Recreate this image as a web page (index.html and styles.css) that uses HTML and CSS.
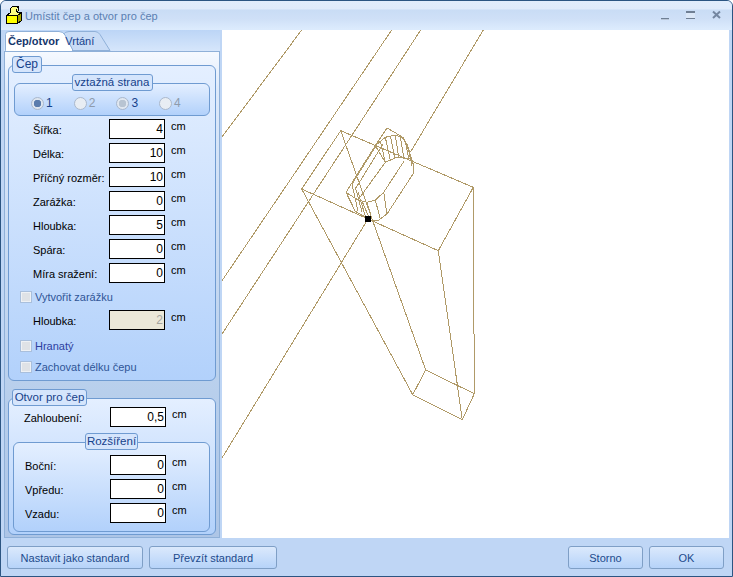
FILE: index.html
```html
<!DOCTYPE html>
<html lang="cs">
<head>
<meta charset="utf-8">
<title>Umístit čep a otvor pro čep</title>
<link rel="stylesheet" href="styles.css">
</head>
<body>
<div class="window">
  <header class="titlebar">
    <svg class="appicon" width="20" height="20" viewBox="0 0 20 20" shape-rendering="crispEdges">
      <path d="M12.500 9.500L16.500 6.500V14.500L12.500 17.500Z" fill="#a8a800" stroke="#000"/>
      <path d="M1.500 9.500L5.500 6.500H16.500L12.500 9.500Z" fill="#ffff80" stroke="#000"/>
      <path d="M1.500 9.500H12.500V17.500H1.500Z" fill="#ffff00" stroke="#000"/>
      <path d="M5.500 6.500V2.500H11.500V6.500" fill="#ffff80" stroke="#000"/>
      <path d="M5.500 2.500L7.500 0.500H13.500L11.500 2.500M13.500 0.500V4.500L11.500 6.500" fill="#ffff80" stroke="#000"/>
    </svg>
    <span class="title">Umístit čep a otvor pro čep</span>
    <div class="controls">
      <svg width="70" height="14" viewBox="0 0 70 14">
        <rect x="0" y="8" width="8" height="1" fill="#6f7f94"/>
        <rect x="0" y="9" width="8" height="1" fill="#b9c6d8"/>
        <rect x="25" y="2" width="9" height="7" fill="#dbe7f7"/>
        <rect x="25" y="1" width="9" height="2" fill="#6f7f94"/>
        <rect x="25" y="8" width="9" height="1" fill="#6f7f94"/>
        <path d="M52 1.500l7 6.500M59 1.500l-7 6.500" stroke="#7486a0" stroke-width="2" fill="none"/>
      </svg>
    </div>
  </header>
  <div class="main">
    <aside class="side">
      <div class="tabstrip">
        <svg class="tabshape" width="112" height="21" viewBox="0 0 112 21">
          <path d="M58.500 4.500Q60 1.500 64 1.500H90Q93 1.500 95 4.500L105 20.500H68Z" fill="#c9dcf6" stroke="#8fb0d8"/>
          <path d="M0.500 20.500V4.500Q0.500 1.500 4 1.500H54Q58 1.500 60 5L68 20.500Z" fill="#fff" stroke="#8fb0d8"/>
          <path d="M1 20.500H67" stroke="#fff"/>
        </svg>
        <span class="tab active">Čep/otvor</span>
        <span class="tab">Vrtání</span>
      </div>
      <div class="tabpanel">
        <section class="group first">
          <div class="legend legend-main">Čep</div>
          <div class="subgroup radiobox">
            <div class="legend legend-center">vztažná strana</div>
            <div class="radios">
              <label class="radio on"><i></i>1</label>
              <label class="radio off"><i></i>2</label>
              <label class="radio dim"><i></i>3</label>
              <label class="radio off"><i></i>4</label>
            </div>
          </div>
          <div class="rows rows-a">
            <label>Šířka:</label><input class="num" value="4"><span>cm</span>
            <label>Délka:</label><input class="num" value="10"><span>cm</span>
            <label>Příčný rozměr:</label><input class="num" value="10"><span>cm</span>
            <label>Zarážka:</label><input class="num" value="0"><span>cm</span>
            <label>Hloubka:</label><input class="num" value="5"><span>cm</span>
            <label>Spára:</label><input class="num" value="0"><span>cm</span>
            <label>Míra sražení:</label><input class="num" value="0"><span>cm</span>
          </div>
          <div class="check check-a"><i></i>Vytvořit zarážku</div>
          <div class="rows rows-b">
            <label>Hloubka:</label><input class="num disabled" value="2" disabled><span>cm</span>
          </div>
          <div class="check check-b"><i></i>Hranatý</div>
          <div class="check check-c"><i></i>Zachovat délku čepu</div>
        </section>
        <section class="group second">
          <div class="legend legend-main">Otvor pro čep</div>
          <div class="rows rows-c">
            <label>Zahloubení:</label><input class="num" value="0,5"><span>cm</span>
          </div>
          <div class="subgroup widen">
            <div class="legend legend-center">Rozšíření</div>
            <div class="rows rows-d">
              <label>Boční:</label><input class="num" value="0"><span>cm</span>
              <label>Vpředu:</label><input class="num" value="0"><span>cm</span>
              <label>Vzadu:</label><input class="num" value="0"><span>cm</span>
            </div>
          </div>
        </section>
      </div>
    </aside>
    <div class="viewport">
      <svg class="drawing" width="507" height="507" viewBox="222 31 507 507">
        <g fill="none" stroke="#b09a68" stroke-width="1" shape-rendering="crispEdges">
          <path d="M222 138L301.700 31M391.700 31L222 281.700M420.700 31L222 335M483.300 31L410.500 153M368 220L222 459"/>
          <path d="M340.700 131.700L473.300 188.300L474.300 394.700L462.300 420.700L412.700 395.700L301.700 190Z"/>
          <path d="M301.700 190L438.300 251.700L473.300 188.300M438.300 251.700L462.300 420.700M340.700 131.700L425.700 371L412.700 395.700M425.700 371L474.300 394.700"/>
          <path d="M387 129L375.300 146.700L346 193.300L355.300 212.300L365.300 218M387 129L400.300 136.700L407 145L413.700 166.700L413 175L387 215L378.700 221L372 222"/>
          <path d="M375.300 146.700L385.300 138.300L395.300 136L403.700 139L408.700 151.700L412 166.700M375.300 146.700L385.300 163.300L397 158.300L410.300 160"/>
          <path d="M380.300 141.700L385.300 163.300M385.300 138.300L390.300 161M390.300 136.700L394.700 159M395.300 136L398.700 158.300M400.300 137.700L403.700 158.300M405.300 141.700L408.700 160"/>
          <path d="M358 201L367 203.300L375.300 201L383.700 193.300L404.300 161.700M358 201L385.300 163.300M352 185L375.300 148M355.300 190L383 145M346 193.300L358 201"/>
          <path d="M352 185L358 212M355.300 188L362 213M358 193L365.300 217M362 202L368.700 218M367 203.300L372 220M375.300 201L380.300 220M383.700 193.300L387 215"/>
        </g>
        <rect x="365" y="217" width="6" height="6" fill="#000"/>
      </svg>
    </div>
  </div>
  <footer class="footer">
    <button class="btn btn-set">Nastavit jako standard</button>
    <button class="btn btn-take">Převzít standard</button>
    <span class="spacer"></span>
    <button class="btn btn-small">Storno</button>
    <button class="btn btn-small">OK</button>
  </footer>
</div>
</body>
</html>
```
FILE: styles.css
```css
* { box-sizing: border-box; }
html, body { margin: 0; padding: 0; }
body {
  width: 733px;
  height: 577px;
  overflow: hidden;
  font-family: "Liberation Sans", Arial, sans-serif;
  font-size: 11px;
  color: #000;
  background: #fff;
}
.window {
  width: 733px;
  height: 577px;
  display: flex;
  flex-direction: column;
  background: #bfd6f5;
  border: 1px solid #2c5582;
  border-radius: 6px 6px 0 0;
  overflow: hidden;
}
.titlebar {
  height: 29px;
  flex: none;
  display: flex;
  align-items: center;
  padding-left: 4px;
  background: linear-gradient(#e2edfc 0, #e0ebfb 8px, #c9dcf5 9px, #cfe0f7 18px, #dcebfd 28px);
}
.appicon { flex: none; margin-top: 1px; }
.title { margin-left: 0; color: #5b7fb2; font-size: 11px; letter-spacing: 0.050px; }
.controls { margin-left: auto; padding-right: 1px; height: 14px; margin-top: 3px; }
.controls svg { display: block; }
.main { flex: 1; display: flex; min-height: 0; }
.side { width: 221px; flex: none; padding-left: 3px; padding-right: 2px; display: flex; flex-direction: column; }
.tabstrip {
  position: relative;
  height: 21px;
  flex: none;
  display: flex;
  padding-left: 4px;
  gap: 6px;
  align-items: flex-end;
  background: linear-gradient(#bcd5f6, #d6e6fb);
}
.tabshape { position: absolute; left: 1px; top: 0; }
.tab { position: relative; color: #15428b; height: 19px; line-height: 18px; }
.tab.active { font-weight: bold; color: #15366b; }
.tabpanel {
  flex: 1;
  min-height: 0;
  padding: 0 3px;
  border: 1px solid #8fb0d8;
  background: linear-gradient(#f5f9ff 0, #dde9fa 8%, #b8cfec 70%, #adc5e6 100%);
}
.group, .subgroup {
  border: 1px solid #6f9bd1;
  border-radius: 6px;
  background: linear-gradient(#e4efff, #b2d1fb);
}
.first { height: 316px; margin-top: 13px; }
.second { height: 137px; margin-top: 17px; }
.legend {
  height: 17px;
  line-height: 15px;
  border: 1px solid #6f9bd1;
  border-radius: 3px;
  background: #d5e5fc;
  color: #15428b;
  text-align: center;
  white-space: nowrap;
  font-size: 11.500px;
}
.legend-main { width: 30px; margin: -10px 0 0 3px; font-size: 12px; }
.second .legend-main { width: 75px; font-size: 11.500px; }
.legend-center { margin: -10px auto 0; width: 81px; }
.radiobox { height: 33px; margin: 10px 5px 0; }
.radios { display: flex; padding-left: 16px; margin-top: 4px; }
.radio { width: 42.700px; display: flex; align-items: center; gap: 2px; height: 16px; color: #15428b; font-size: 12px; }
.radio i {
  width: 13px;
  height: 13px;
  border-radius: 50%;
  border: 1px solid #aab8cc;
  background: #e8edf3;
  display: block;
}
.radio.on i { background: radial-gradient(circle, #5a7cad 0 3.500px, #dde5ef 4px); }
.radio.dim i { background: radial-gradient(circle, #b8c4d2 0 3.500px, #e0e7f0 4px); }
.radio.off { color: #8e9bab; }
.rows {
  display: grid;
  grid-template-columns: 76px 56px auto;
  grid-auto-rows: 20px;
  row-gap: 4px;
  align-items: center;
  padding-left: 24px;
}
.rows label { padding-top: 2px; white-space: nowrap; }
.rows span { padding: 0 0 6px 6px; }
.rows-a { margin-top: 3px; }
.rows-b { margin-top: 5px; }
.rows-c { margin-top: 1px; padding-left: 15px; grid-template-columns: 86px 56px auto; }
.rows-d { margin-top: 5px; padding-left: 11px; grid-template-columns: 85px 56px auto; }
.num {
  width: 56px;
  height: 20px;
  border: 1px solid #000;
  border-radius: 0;
  background: #fff;
  padding: 0 1px 0 0;
  margin: 0;
  font-family: "Liberation Sans", Arial, sans-serif;
  font-size: 12px;
  text-align: right;
  color: #000;
}
.num.disabled { background: #ebe8d8; color: #a5a5a0; }
.check { display: flex; align-items: center; height: 16px; padding-left: 11px; color: #2f5597; gap: 3px; }
.check i { width: 12px; height: 12px; display: block; border: 1px solid #a9bfdc; background: #dfe2e6; box-shadow: inset 0 0 0 1px #eef1f5; }
.check-a { margin-top: 6px; }
.check-b { margin-top: 8px; color: #2d3fa0; }
.check-c { margin-top: 5px; }
.widen { height: 90px; margin: 15px 5px 0 4px; }
.widen .legend-center { width: 53px; }
.viewport { flex: 1; background: #fff; margin-right: 3px; overflow: hidden; }
.drawing { display: block; }
.footer { height: 38px; flex: none; display: flex; align-items: flex-start; padding: 8px 8px 0 6px; gap: 6px; }
.spacer { flex: 1; }
.btn {
  height: 23px;
  padding: 0;
  border: 1px solid #7f9fc6;
  border-radius: 3px;
  background: linear-gradient(#dbe9fc, #b6d3f9);
  font-family: "Liberation Sans", Arial, sans-serif;
  font-size: 11px;
  color: #1c4a8c;
}
.btn-set { width: 136px; }
.btn-take { width: 128px; }
.btn-small { width: 75px; }
```
